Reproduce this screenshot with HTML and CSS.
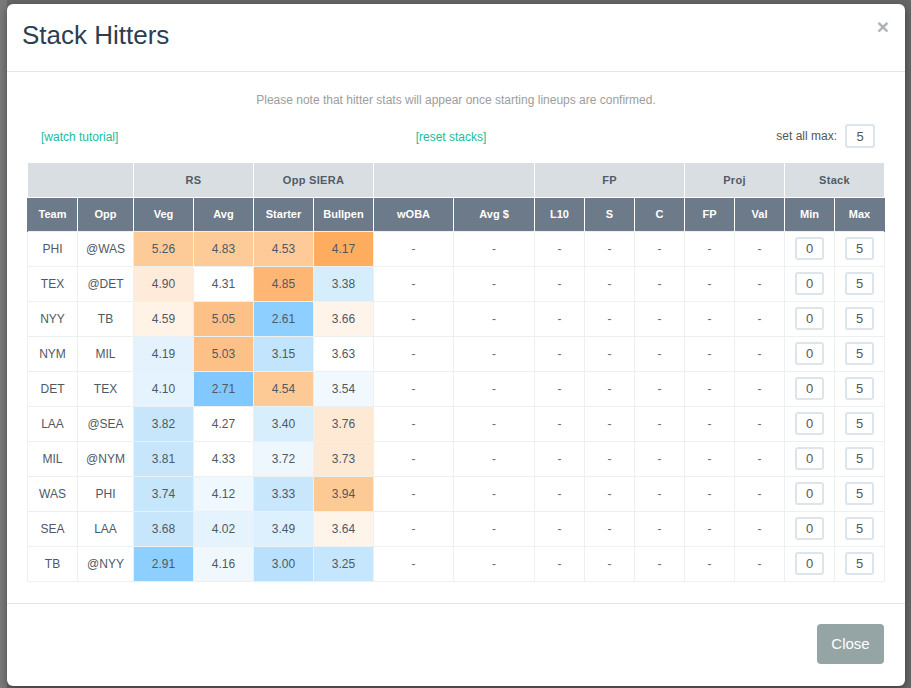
FILE: index.html
```html
<!DOCTYPE html>
<html>
<head>
<meta charset="utf-8">
<title>Stack Hitters</title>
<link rel="stylesheet" href="styles.css">
</head>
<body>
<div class="backdrop">
  <div class="modal">
    <div class="modal-header">
      <h4 class="modal-title">Stack Hitters</h4>
      <button class="close" type="button">×</button>
    </div>
    <div class="modal-body">
      <p class="note">Please note that hitter stats will appear once starting lineups are confirmed.</p>
      <div class="controls">
        <div class="ctl-left"><a class="link">[watch tutorial]</a></div>
        <div class="ctl-center"><a class="link">[reset stacks]</a></div>
        <div class="ctl-right"><span class="setmax">set all max:</span><input class="num big" value="5"></div>
      </div>
      <table class="stack">
        <colgroup>
          <col style="width:50px"><col style="width:56px"><col style="width:60px"><col style="width:60px"><col style="width:60px"><col style="width:60px"><col style="width:80px"><col style="width:81px"><col style="width:50px"><col style="width:50px"><col style="width:50px"><col style="width:50px"><col style="width:50px"><col style="width:50px"><col style="width:50px">
        </colgroup>
        <thead>
          <tr class="group">
            <th colspan="2"></th>
            <th colspan="2">RS</th>
            <th colspan="2">Opp SIERA</th>
            <th colspan="2"></th>
            <th colspan="3">FP</th>
            <th colspan="2">Proj</th>
            <th colspan="2">Stack</th>
          </tr>
          <tr class="cols">
            <th>Team</th><th>Opp</th><th>Veg</th><th>Avg</th><th>Starter</th><th>Bullpen</th><th>wOBA</th><th>Avg $</th><th>L10</th><th>S</th><th>C</th><th>FP</th><th>Val</th><th>Min</th><th>Max</th>
          </tr>
        </thead>
        <tbody>
          <tr><td>PHI</td><td>@WAS</td><td style="background:#fdcb98">5.26</td><td style="background:#fdcb98">4.83</td><td style="background:#fdca98">4.53</td><td style="background:#feac5e">4.17</td><td class="d">-</td><td class="d">-</td><td class="d">-</td><td class="d">-</td><td class="d">-</td><td class="d">-</td><td class="d">-</td><td><input class="num" value="0"></td><td><input class="num" value="5"></td></tr>
          <tr><td>TEX</td><td>@DET</td><td style="background:#feebd9">4.90</td><td>4.31</td><td style="background:#feb674">4.85</td><td style="background:#d6eefc">3.38</td><td class="d">-</td><td class="d">-</td><td class="d">-</td><td class="d">-</td><td class="d">-</td><td class="d">-</td><td class="d">-</td><td><input class="num" value="0"></td><td><input class="num" value="5"></td></tr>
          <tr><td>NYY</td><td>TB</td><td style="background:#fff3e7">4.59</td><td style="background:#fdc087">5.05</td><td style="background:#8dcfff">2.61</td><td style="background:#fff4ea">3.66</td><td class="d">-</td><td class="d">-</td><td class="d">-</td><td class="d">-</td><td class="d">-</td><td class="d">-</td><td class="d">-</td><td><input class="num" value="0"></td><td><input class="num" value="5"></td></tr>
          <tr><td>NYM</td><td>MIL</td><td style="background:#e3f2fd">4.19</td><td style="background:#fdc188">5.03</td><td style="background:#c2e4fc">3.15</td><td>3.63</td><td class="d">-</td><td class="d">-</td><td class="d">-</td><td class="d">-</td><td class="d">-</td><td class="d">-</td><td class="d">-</td><td><input class="num" value="0"></td><td><input class="num" value="5"></td></tr>
          <tr><td>DET</td><td>TEX</td><td style="background:#e4f3fd">4.10</td><td style="background:#80c8ff">2.71</td><td style="background:#fdc995">4.54</td><td style="background:#f1f8fe">3.54</td><td class="d">-</td><td class="d">-</td><td class="d">-</td><td class="d">-</td><td class="d">-</td><td class="d">-</td><td class="d">-</td><td><input class="num" value="0"></td><td><input class="num" value="5"></td></tr>
          <tr><td>LAA</td><td>@SEA</td><td style="background:#c7e6fc">3.82</td><td>4.27</td><td style="background:#d7eefc">3.40</td><td style="background:#fee9d5">3.76</td><td class="d">-</td><td class="d">-</td><td class="d">-</td><td class="d">-</td><td class="d">-</td><td class="d">-</td><td class="d">-</td><td><input class="num" value="0"></td><td><input class="num" value="5"></td></tr>
          <tr><td>MIL</td><td>@NYM</td><td style="background:#c7e6fc">3.81</td><td>4.33</td><td style="background:#eef7fe">3.72</td><td style="background:#fee9d5">3.73</td><td class="d">-</td><td class="d">-</td><td class="d">-</td><td class="d">-</td><td class="d">-</td><td class="d">-</td><td class="d">-</td><td><input class="num" value="0"></td><td><input class="num" value="5"></td></tr>
          <tr><td>WAS</td><td>PHI</td><td style="background:#c6e6fc">3.74</td><td style="background:#eff8fe">4.12</td><td style="background:#c8e6fc">3.33</td><td style="background:#fdc995">3.94</td><td class="d">-</td><td class="d">-</td><td class="d">-</td><td class="d">-</td><td class="d">-</td><td class="d">-</td><td class="d">-</td><td><input class="num" value="0"></td><td><input class="num" value="5"></td></tr>
          <tr><td>SEA</td><td>LAA</td><td style="background:#c7e6fc">3.68</td><td style="background:#e4f3fd">4.02</td><td style="background:#ddf0fd">3.49</td><td style="background:#fff4ea">3.64</td><td class="d">-</td><td class="d">-</td><td class="d">-</td><td class="d">-</td><td class="d">-</td><td class="d">-</td><td class="d">-</td><td><input class="num" value="0"></td><td><input class="num" value="5"></td></tr>
          <tr><td>TB</td><td>@NYY</td><td style="background:#8dd0ff">2.91</td><td style="background:#f0f8fe">4.16</td><td style="background:#b9e1fd">3.00</td><td style="background:#c5e6fc">3.25</td><td class="d">-</td><td class="d">-</td><td class="d">-</td><td class="d">-</td><td class="d">-</td><td class="d">-</td><td class="d">-</td><td><input class="num" value="0"></td><td><input class="num" value="5"></td></tr>
        </tbody>
      </table>
    </div>
    <div class="modal-footer">
      <button class="btn-close" type="button">Close</button>
    </div>
  </div>
</div>
</body>
</html>
```
FILE: styles.css
```css
* { box-sizing: border-box; }
html, body { margin: 0; padding: 0; }
body {
  font-family: "Liberation Sans", Arial, sans-serif;
  background: #6b6b6b;
  width: 911px;
  height: 688px;
  overflow: hidden;
}
.backdrop {
  width: 911px;
  height: 688px;
  padding: 4px 0 0 7px;
  background: linear-gradient(to right, #7a7a7a 0, #7a7a7a 7px, #666 7px);
}
.modal {
  width: 898px;
  background: #fff;
  border-radius: 6px;
  box-shadow: 0 3px 9px rgba(0,0,0,0.4);
}
.modal-header {
  display: flex;
  justify-content: space-between;
  align-items: flex-start;
  padding: 17px 16px 21px 15px;
  border-bottom: 1px solid #e5e5e5;
}
.modal-title {
  margin: 0;
  font-size: 26px;
  line-height: 29px;
  font-weight: normal;
  color: #2c3e50;
}
.close {
  border: 0;
  background: none;
  padding: 0;
  margin-top: -5px;
  font-family: "Liberation Sans", Arial, sans-serif;
  font-size: 21px;
  font-weight: bold;
  line-height: 1;
  color: #abb3b9;
}
.modal-body {
  padding: 20px 20px 21px 20px;
}
.note {
  margin: 0;
  text-align: center;
  font-size: 12px;
  line-height: 17px;
  color: #9d9d9d;
}
.controls {
  margin-top: 15px;
  display: grid;
  grid-template-columns: 1fr 1fr 1fr;
  align-items: center;
  height: 24px;
}
.ctl-left { padding-left: 14px; }
.ctl-center { text-align: center; padding-right: 10px; }
.ctl-right {
  display: flex;
  justify-content: flex-end;
  align-items: center;
  padding-right: 10px;
}
.link {
  font-size: 12px;
  color: #18bc9c;
}
.setmax {
  font-size: 12px;
  color: #555;
  margin-right: 8px;
}
.num {
  width: 29px;
  height: 23px;
  border: 2px solid #dce4ec;
  border-radius: 3px;
  text-align: center;
  font-family: "Liberation Sans", Arial, sans-serif;
  font-size: 13px;
  color: #555;
  padding: 0;
  background: #fff;
}
.num.big { width: 30px; height: 24px; }
.stack {
  margin-top: 15px;
  width: 857px;
  table-layout: fixed;
  border-collapse: collapse;
}
.stack th {
  font-size: 11px;
  font-weight: bold;
  text-align: center;
  padding: 0;
}
.stack .group th {
  background: #d9dee2;
  color: #505c68;
  height: 34px;
  border: 1px solid #fff;
  border-top: 0;
  letter-spacing: 0.3px;
}
.stack .group th:first-child { border-left: 0; }
.stack .cols th {
  background: #6c7a89;
  color: #fff;
  height: 34px;
  border: 1px solid #fff;
  border-top: 0;
  border-bottom: 0;
}
.stack .cols th:first-child { border-left: 1px solid #6c7a89; }
.stack .cols th:last-child { border-right: 1px solid #6c7a89; }
.stack td {
  height: 35px;
  padding: 0;
  text-align: center;
  font-size: 12px;
  color: #4f5964;
  border: 1px solid #ecf0f1;
}
.stack td.d { color: #6a6a6a; }
.modal-footer {
  border-top: 1px solid #e5e5e5;
  padding: 20px 21px 22px 20px;
  display: flex;
  justify-content: flex-end;
}
.btn-close {
  width: 67px;
  height: 40px;
  border: 0;
  border-radius: 4px;
  background: #95a5a6;
  color: #fff;
  font-family: "Liberation Sans", Arial, sans-serif;
  font-size: 15px;
  padding: 0;
}
```
